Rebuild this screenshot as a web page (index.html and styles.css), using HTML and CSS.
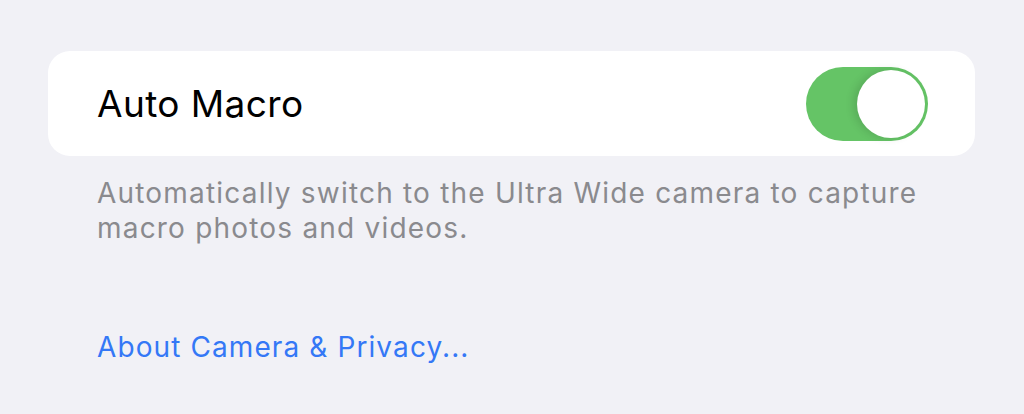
FILE: index.html
```html
<!DOCTYPE html>
<html lang="en">
<head>
  <meta charset="UTF-8">
  <meta name="viewport" content="width=device-width, initial-scale=1.0">
  <title>Camera Settings</title>
  <link rel="stylesheet" href="styles.css">
</head>
<body>
  <div class="group">
    <div class="row">
      <span class="row-label">Auto Macro</span>
      <span class="switch on"><span class="knob"></span></span>
    </div>
  </div>
  <p class="footer">Automatically switch to the Ultra Wide camera to capture macro photos and videos.</p>
  <a class="link" href="#">About Camera &amp; Privacy...</a>
</body>
</html>
```

FILE: styles.css
```css
body {
  font-family: Inter, "Noto Sans", sans-serif;
  background: #f1f1f6;
  margin: 0;
  padding: 51px 49px 0 48px;
}
.group {
  background: #fff;
  border-radius: 22px;
}
.row {
  display: flex;
  align-items: center;
  justify-content: space-between;
  height: 105px;
  padding: 0 47px 0 49px;
}
.row-label {
  font-size: 37px;
  color: #000;
  letter-spacing: 0.4px;
}
.switch {
  width: 122px;
  height: 74px;
  border-radius: 37px;
  background: #65c466;
  display: flex;
  align-items: center;
  justify-content: flex-end;
  padding: 0 3px;
  box-sizing: border-box;
}
.knob {
  width: 68px;
  height: 68px;
  border-radius: 50%;
  background: #fff;
  box-shadow: -4px 0 8px rgba(0, 0, 0, 0.12);
}
.footer {
  margin: 20px 0 0 49px;
  font-size: 28px;
  line-height: 35px;
  color: #8a8a8e;
  letter-spacing: 1.2px;
  max-width: 860px;
}
.link {
  display: block;
  margin: 84px 0 0 49px;
  font-size: 28px;
  color: #3478f6;
  letter-spacing: 1.1px;
  text-decoration: none;
}
```
